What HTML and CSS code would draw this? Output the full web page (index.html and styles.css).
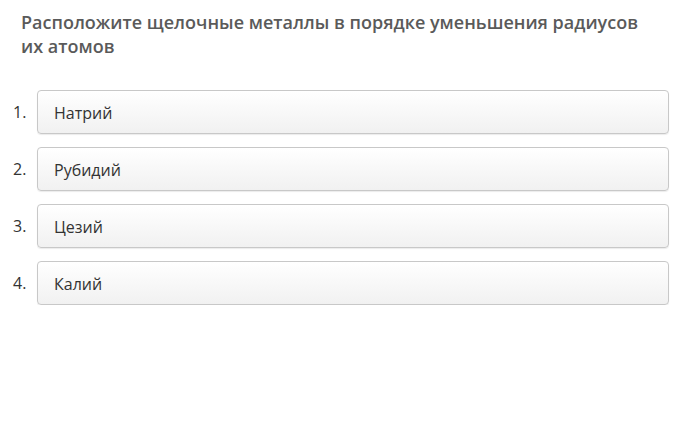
FILE: index.html
```html
<!DOCTYPE html>
<html lang="ru">
<head>
    <meta charset="UTF-8">
    <title>Порядок</title>
    <link rel="stylesheet" href="styles.css">
</head>
<body>
    <div class="question">
        <h1 class="title">Расположите щелочные металлы в порядке уменьшения радиусов их атомов</h1>

        <ol class="order-list">
            <li class="order-item">
                <span class="num">1.</span>
                <div class="box">Натрий</div>
            </li>
            <li class="order-item">
                <span class="num">2.</span>
                <div class="box">Рубидий</div>
            </li>
            <li class="order-item">
                <span class="num">3.</span>
                <div class="box">Цезий</div>
            </li>
            <li class="order-item">
                <span class="num">4.</span>
                <div class="box">Калий</div>
            </li>
        </ol>
    </div>
</body>
</html>
```
FILE: styles.css
```css
body {
    margin: 0;
    padding: 0;
    font-family: "Open Sans", Arial, sans-serif;
    background: #fff;
    color: #333;
}

.question {
    padding: 10px 19px 0 13px;
}

.title {
    margin: 0 0 32px 8px;
    font-size: 18px;
    font-weight: 600;
    line-height: 24px;
    color: #5a5a5a;
    max-width: 630px;
}

.order-list {
    list-style: none;
    margin: 0;
    padding: 0;
    display: flex;
    flex-direction: column;
    gap: 13px;
}

.order-item {
    display: flex;
    align-items: flex-start;
}

.num {
    width: 24px;
    font-size: 16px;
    line-height: 22px;
    padding-top: 11px;
    color: #333;
}

.box {
    flex: 1;
    height: 42px;
    line-height: 44px;
    padding: 0 16px;
    font-size: 16px;
    color: #333;
    border: 1px solid #c8c8c8;
    border-radius: 4px;
    background: linear-gradient(#ffffff, #f1f1f1);
    box-shadow: 0 1px 1px rgba(0, 0, 0, 0.08);
}
```
